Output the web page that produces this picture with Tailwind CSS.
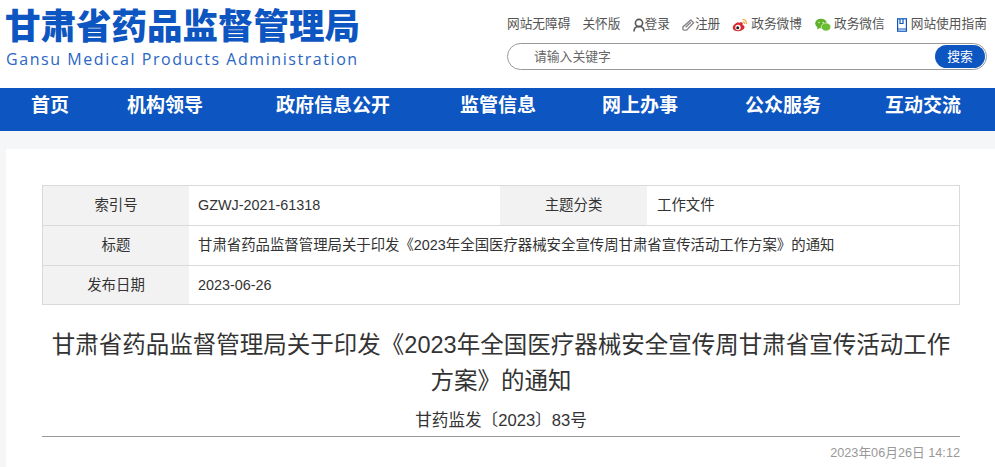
<!DOCTYPE html>
<html lang="zh">
<head>
<meta charset="utf-8">
<script src="https://cdn.jsdelivr.net/npm/@tailwindcss/browser@4"></script>
</head>
<body class="bg-[#f5f6f8] font-['Liberation_Sans','Noto_Sans_CJK_SC',sans-serif] overflow-hidden h-[467px]">
<header class="bg-white h-[88px] flex justify-between">
  <div class="pl-[5px] pt-[5px]">
    <div class="text-[35.5px] leading-[44px] font-black text-[#0d55c0] whitespace-nowrap">甘肃省药品监督管理局</div>
    <div class="text-[16px] leading-[20px] tracking-[1.56px] text-[#2a66c4] font-['Open_Sans',sans-serif] whitespace-nowrap pl-[1px]">Gansu Medical Products Administration</div>
  </div>
  <div class="w-[488px] pr-[8px] pt-[15px]">
    <div class="flex items-center text-[12.7px] leading-[18px] text-[#555] whitespace-nowrap h-[18px]">
      <span>网站无障碍</span>
      <span class="ml-[12px]">关怀版</span>
      <span class="ml-[12px] flex items-center"><svg class="w-[12px] h-[14px] mt-[2px]" viewBox="0 0 12 14" fill="none" stroke="#555" stroke-width="1.6"><circle cx="6" cy="5" r="3.6"/><path d="M1 13.500c0-3.500 2-5 5-5s5 1.500 5 5"/></svg>登录</span>
      <span class="ml-[12px] flex items-center"><svg class="w-[13px] h-[14px] mt-[2px]" viewBox="0 0 14 14" fill="none" stroke="#888" stroke-width="1.500"><path d="M9.500 1.500 12.500 4.500 5 12.500H2C1.300 12.500 1 12 1 11.300V9z"/><path d="M4 9.500 9.500 4"/></svg>注册</span>
      <span class="ml-[12px] flex items-center"><svg class="w-[16px] h-[14px] mt-[2px] mr-[3px]" viewBox="0 0 16 14"><path fill="#d9282f" d="M6.500 4C3.500 5 .5 7.500.8 10c.3 2.300 3 3.500 5.700 3.300 3.300-.2 6-2 6-4.200 0-1.300-1.200-1.800-2-2 .4-1 .4-2-.3-2.500-.8-.6-2.300-.2-3.700.4z"/><circle cx="6" cy="9.500" r="2.700" fill="#fff"/><circle cx="5.700" cy="9.700" r="1.500" fill="#222"/><path d="M10.500 1.500c2.500-.3 4.500 1.800 3.800 4.500M10.800 3.800c1.200-.1 2 .8 1.700 2" fill="none" stroke="#f0a030" stroke-width="1.100"/></svg>政务微博</span>
      <span class="ml-[13px] flex items-center"><svg class="w-[16px] h-[14px] mt-[2px] mr-[3px]" viewBox="0 0 16 14"><ellipse cx="6" cy="5.500" rx="5.800" ry="4.800" fill="#5fb02b"/><path d="M2.500 9 2 11.500 5 10z" fill="#5fb02b"/><ellipse cx="11" cy="9" rx="4.800" ry="4" fill="#6bbd33" stroke="#fff" stroke-width=".6"/><circle cx="4" cy="4.500" r=".7" fill="#fff"/><circle cx="8" cy="4.500" r=".7" fill="#fff"/></svg>政务微信</span>
      <span class="ml-[12px] flex items-center"><svg class="w-[10px] h-[14px] mt-[2px] mr-[4px]" viewBox="0 0 10 14" fill="none" stroke="#0d55c0" stroke-width="1.200"><rect x=".6" y=".8" width="8.800" height="12.400"/><path d="M3 1v4.500h3V1M.6 11h8.800"/></svg>网站使用指南</span>
    </div>
    <div class="mt-[10px] h-[27px] border border-[#999] rounded-full flex items-center justify-between pl-[26px] pr-[1px]">
      <span class="text-[12.8px] text-[#666]">请输入关键字</span>
      <span class="w-[50px] h-[23px] rounded-full bg-[#0d55c0] text-white text-[12.8px] flex items-center justify-center">搜索</span>
    </div>
  </div>
</header>
<nav class="bg-[#0d55c0] h-[43px] flex items-center pl-[31px] pb-[6px] text-white text-[19px] font-bold whitespace-nowrap">
  <span>首页</span>
  <span class="ml-[58px]">机构领导</span>
  <span class="ml-[73px]">政府信息公开</span>
  <span class="ml-[70px]">监管信息</span>
  <span class="ml-[66px]">网上办事</span>
  <span class="ml-[67px]">公众服务</span>
  <span class="ml-[64px]">互动交流</span>
</nav>
<main class="bg-white ml-[6px] mt-[18px] pl-[36px] pr-[35px] pt-[36px] h-[318px] text-[#333]">
  <div class="grid grid-cols-[146px_311px_147px_1fr] border border-[#d9d9d9] text-[14.4px] w-[918px]">
    <div class="h-[40px] bg-[#f2f2f2] flex items-center justify-center border-b border-[#d9d9d9]">索引号</div>
    <div class="h-[40px] flex items-center pl-[9px] border-b border-[#d9d9d9]">GZWJ-2021-61318</div>
    <div class="h-[40px] bg-[#f2f2f2] flex items-center justify-center border-b border-[#d9d9d9]">主题分类</div>
    <div class="h-[40px] flex items-center pl-[10px] border-b border-[#d9d9d9]">工作文件</div>
    <div class="h-[40px] bg-[#f2f2f2] flex items-center justify-center border-b border-[#d9d9d9]">标题</div>
    <div class="h-[40px] col-span-3 flex items-center pl-[9px] border-b border-[#d9d9d9]">甘肃省药品监督管理局关于印发《2023年全国医疗器械安全宣传周甘肃省宣传活动工作方案》的通知</div>
    <div class="h-[38px] bg-[#f2f2f2] flex items-center justify-center pt-[2px]">发布日期</div>
    <div class="h-[38px] col-span-3 flex items-center pl-[9px] pt-[2px]">2023-06-26</div>
  </div>
  <h1 class="mt-[22px] px-[8px] text-[23.5px] leading-[36px] text-center text-[#333] w-[918px]">甘肃省药品监督管理局关于印发《2023年全国医疗器械安全宣传周甘肃省宣传活动工作方案》的通知</h1>
  <div class="mt-[10px] text-[16.6px] leading-[24px] text-center w-[918px]">甘药监发〔2023〕83号</div>
  <div class="mt-[3px] border-t border-[#999] w-[918px] pt-[7px] text-right text-[12.7px] leading-[18px] text-[#999]">2023年06月26日 14:12</div>
</main>
</body>
</html>
